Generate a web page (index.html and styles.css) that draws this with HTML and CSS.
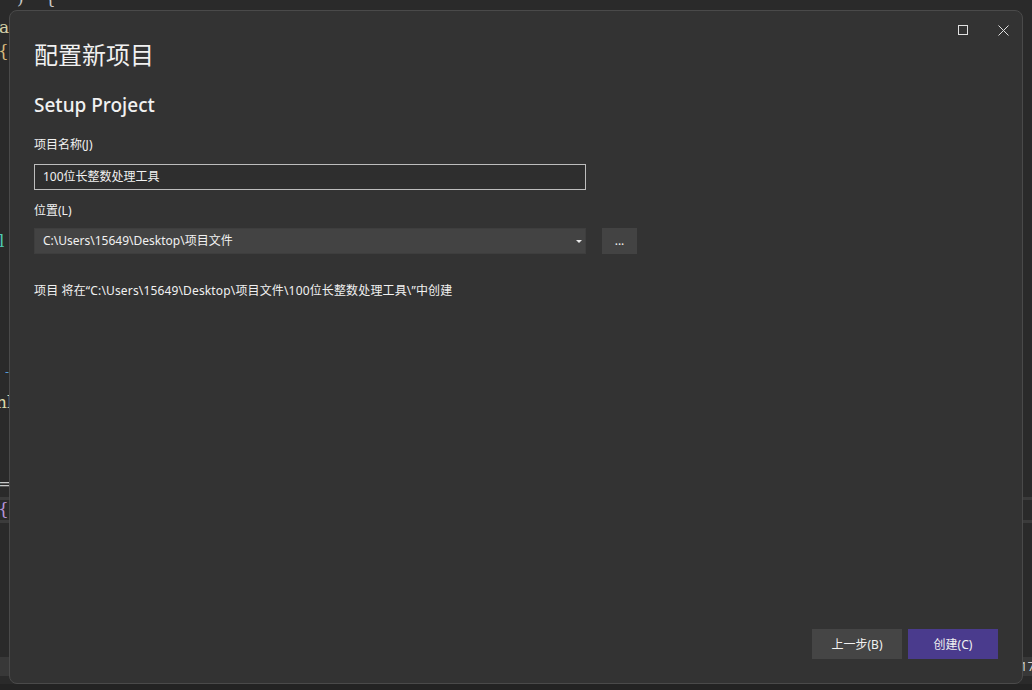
FILE: index.html
```html
<!DOCTYPE html>
<html lang="zh-CN">
<head>
<meta charset="utf-8">
<title>配置新项目</title>
<link rel="stylesheet" href="styles.css">
</head>
<body>
<div class="desktop">
  <div class="editor">
    <div class="band band-a"></div>
    <div class="band band-b"></div>
    <div class="band band-status"></div>
    <div class="band band-bottom"></div>
    <span class="code c1">) {</span>
    <span class="code c2">a</span>
    <span class="code c3">{</span>
    <span class="code c4">l</span>
    <span class="code c5">-</span>
    <span class="code c6">nl</span>
    <span class="code c7">=</span>
    <span class="code c8">{</span>
    <span class="code c9">17</span>
  </div>

  <div class="dialog">
    <div class="window-controls">
      <button class="wc" aria-label="最大化">
        <svg width="10" height="10" viewBox="0 0 10 10"><rect x="0.5" y="0.5" width="9" height="9" fill="none" stroke="#e0e0e0" stroke-width="1"/></svg>
      </button>
      <button class="wc" aria-label="关闭">
        <svg width="11" height="11" viewBox="0 0 11 11"><path d="M0.5 0.5 L10.5 10.5 M10.5 0.5 L0.5 10.5" stroke="#e0e0e0" stroke-width="1" fill="none"/></svg>
      </button>
    </div>

    <div class="content">
      <h1 class="title">配置新项目</h1>
      <h2 class="subtitle">Setup Project</h2>

      <label class="label label-name">项目名称(J)</label>
      <div class="text-input">100位长整数处理工具</div>

      <label class="label label-loc">位置(L)</label>
      <div class="loc-row">
        <div class="combo">
          <span class="combo-text">C:\Users\15649\Desktop\项目文件</span>
          <span class="combo-arrow"></span>
        </div>
        <button class="browse">...</button>
      </div>

      <p class="info">项目 将在“C:\Users\15649\Desktop\项目文件\100位长整数处理工具\”中创建</p>
    </div>

    <div class="footer">
      <button class="btn btn-back">上一步(B)</button>
      <button class="btn btn-create">创建(C)</button>
    </div>
  </div>
</div>
</body>
</html>
```

FILE: styles.css
```css
* { box-sizing: border-box; }

html, body {
  margin: 0;
  padding: 0;
}

body {
  width: 1032px;
  height: 690px;
  overflow: hidden;
  background: #2b2b2b;
  font-family: "Noto Sans", "Noto Sans CJK SC", sans-serif;
  color: #f1f1f1;
}

.desktop {
  position: relative;
  width: 1032px;
  height: 690px;
}

/* ---- background editor (behind the dialog) ---- */
.editor {
  position: absolute;
  inset: 0;
  background: #2a2a2a;
}

.band {
  position: absolute;
  left: 0;
  right: 0;
}
.band-a { top: 497px; height: 3px; background: #3b3b3b; }
.band-b { top: 520px; height: 3px; background: #3b3b3b; }
.band-status { top: 657px; height: 19px; background: #383838; }
.band-bottom { top: 684px; height: 6px; background: #232323; }

.code {
  position: absolute;
  font-family: "DejaVu Serif", "Liberation Serif", serif;
  font-size: 17px;
  line-height: 20px;
}
.c1 { left: 17px; top: -12px; color: #c8c8c8; letter-spacing: 8px; }
.c2 { left: -1px; top: 17px; color: #d4d0a8; }
.c3 { left: -2px; top: 41px; color: #d7ba7d; }
.c4 { left: -1px; top: 231px; color: #4ec9b0; }
.c5 { left: 5px; top: 362px; color: #569cd6; font-size: 12px; }
.c6 { left: -4px; top: 392px; color: #dcdcaa; }
.c7 { left: -2px; top: 473px; color: #c8c8c8; }
.c8 { left: -2px; top: 499px; color: #b794d8; }
.c9 { left: 1020px; top: 656px; color: #d0d0d0; font-size: 13px; font-family: "Noto Sans", sans-serif; }

/* ---- dialog window ---- */
.dialog {
  position: absolute;
  left: 9px;
  top: 10px;
  width: 1014px;
  height: 674px;
  background: #333333;
  border: 1px solid #4a4a4a;
  border-radius: 8px;
  display: flex;
  flex-direction: column;
  justify-content: space-between;
  padding: 27px 24px 24px 24px;
}

.window-controls {
  position: absolute;
  top: 8px;
  right: 8px;
  display: flex;
  gap: 18px;
}

.wc {
  width: 22px;
  height: 22px;
  padding: 0;
  border: 0;
  background: transparent;
  display: flex;
  align-items: center;
  justify-content: center;
}

.content {
  display: flex;
  flex-direction: column;
  align-items: flex-start;
}

.title {
  margin: 0;
  font-family: "Noto Sans CJK SC", sans-serif;
  font-size: 24px;
  font-weight: 400;
  line-height: 32px;
  color: #f1f1f1;
}

.subtitle {
  margin: 21px 0 0 0;
  font-size: 19px;
  font-weight: 500;
  line-height: 28px;
  color: #f1f1f1;
}

.label {
  display: block;
  font-size: 12px;
  line-height: 20px;
  color: #f1f1f1;
}
.label-name { margin-top: 16px; }
.label-loc { margin-top: 11px; }

.text-input {
  margin-top: 9px;
  width: 552px;
  height: 26px;
  border: 1px solid #bdbdbd;
  background: #2e2e2e;
  padding: 0 8px;
  font-size: 12px;
  line-height: 24px;
  color: #f1f1f1;
}

.loc-row {
  margin-top: 7px;
  display: flex;
  gap: 16px;
}

.combo {
  width: 552px;
  height: 26px;
  background: #434343;
  border: 1px solid #3e3e3e;
  padding: 0 8px;
  display: flex;
  align-items: center;
  justify-content: space-between;
}

.combo-text {
  font-size: 12px;
  line-height: 24px;
  color: #f1f1f1;
}

.combo-arrow {
  width: 0;
  height: 0;
  margin-right: -5px;
  border-left: 3px solid transparent;
  border-right: 3px solid transparent;
  border-top: 3px solid #e8e8e8;
}

.browse {
  width: 35px;
  height: 26px;
  padding: 0;
  border: 0;
  background: #434343;
  color: #f1f1f1;
  font-family: "Noto Sans", sans-serif;
  font-size: 12px;
  line-height: 26px;
}

.info {
  margin: 27px 0 0 0;
  font-size: 12px;
  line-height: 20px;
  letter-spacing: 0.15px;
  color: #f1f1f1;
}

.footer {
  display: flex;
  justify-content: flex-end;
  gap: 6px;
}

.btn {
  width: 90px;
  height: 30px;
  padding: 0;
  border: 0;
  font-family: "Noto Sans", "Noto Sans CJK SC", sans-serif;
  font-size: 12px;
  color: #f1f1f1;
}
.btn-back { background: #454545; }
.btn-create { background: #4a3b8d; }
```
